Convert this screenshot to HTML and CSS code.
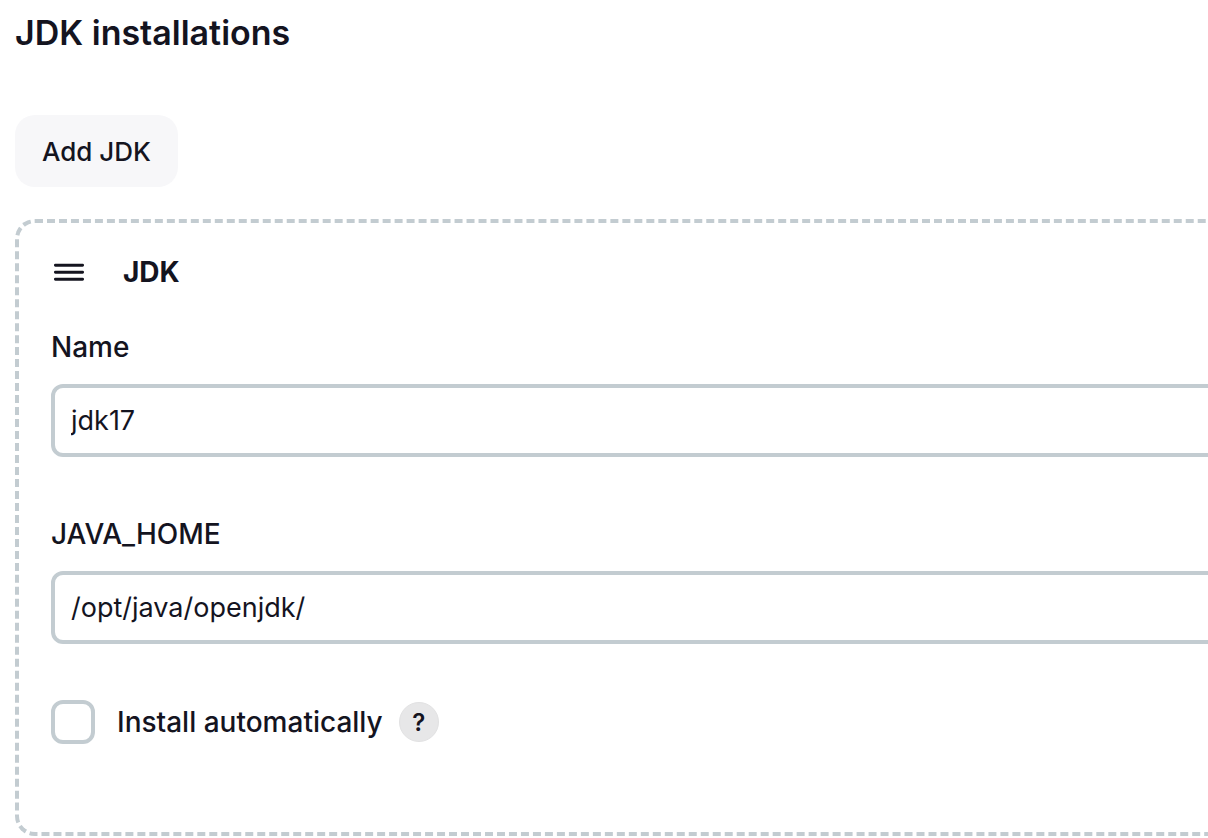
FILE: index.html
```html
<!DOCTYPE html>
<html lang="en">
<head>
<meta charset="utf-8">
<title>JDK installations</title>
<link rel="stylesheet" href="styles.css">
</head>
<body>
<main class="section">
  <h1 class="section-title">JDK installations</h1>
  <button class="add-button" type="button">Add JDK</button>
  <form class="card">
    <header class="card-header">
      <button class="drag-handle" type="button" aria-label="Reorder">
        <svg width="32" height="20" viewBox="0 0 32 20" aria-hidden="true"><path d="M2.4 3.3H29.6M2.4 10.3H29.6M2.4 17.3H29.6" fill="none" stroke="#14141f" stroke-width="2.9" stroke-linecap="round"/></svg>
      </button>
      <h2 class="card-title">JDK</h2>
    </header>
    <div class="field">
      <label class="label" for="name">Name</label>
      <input class="text-input" id="name" type="text" value="jdk17">
    </div>
    <div class="field">
      <label class="label" for="home">JAVA_HOME</label>
      <input class="text-input" id="home" type="text" value="/opt/java/openjdk/" spellcheck="false">
    </div>
    <div class="option">
      <input class="checkbox" id="auto" type="checkbox">
      <label class="label" for="auto">Install automatically</label>
      <button class="help" type="button">?</button>
    </div>
  </form>
</main>
</body>
</html>
```
FILE: styles.css
```css
* { box-sizing: border-box; }
html { overflow-x: hidden; }
body {
  margin: 0;
  background: #fff;
  color: #14141f;
  font-family: Inter, "Liberation Sans", sans-serif;
  font-size: 28px;
}
button, input { font: inherit; color: inherit; }
.section {
  display: flex;
  flex-direction: column;
  align-items: flex-start;
  padding: 12px 0 0 15px;
}
.section-title { margin: 0; font-size: 34px; line-height: 42px; font-weight: 600; }
.add-button {
  margin-top: 61px;
  padding: 0 27px;
  height: 72px;
  border: 0;
  border-radius: 20px;
  background: #f7f7f9;
  font-size: 26px;
  font-weight: 500;
}
.card {
  align-self: stretch;
  margin: 32px -36px 0 0;
  padding: 31px 0 88px 32px;
  border: 4px dashed #c3ccd1;
  border-radius: 20px;
}
.card-header { display: flex; align-items: center; gap: 38px; height: 36px; }
.drag-handle { display: flex; padding: 0 0 0 2px; border: 0; background: none; }
.card-title { margin: 0; font-size: 28px; font-weight: 700; }
.field { display: flex; flex-direction: column; gap: 20px; margin-top: 40px; }
.field + .field { margin-top: 60px; }
.label { line-height: 34px; font-weight: 500; }
.text-input {
  width: 100%;
  height: 73px;
  padding: 0 16px;
  border: 4px solid #c3ccd1;
  border-radius: 12px;
  background: #fff;
  font-size: 27px;
}
.option { display: flex; align-items: center; margin-top: 56px; }
.checkbox {
  appearance: none;
  width: 44px;
  height: 44px;
  margin: 0 22px 0 0;
  border: 4px solid #c3ccd1;
  border-radius: 12px;
}
.help {
  width: 40px;
  height: 40px;
  margin-left: 16px;
  padding: 0;
  border: 1px solid #e2e2e3;
  border-radius: 50%;
  background: #e7e7e8;
  font-size: 24px;
  font-weight: 600;
}
```
